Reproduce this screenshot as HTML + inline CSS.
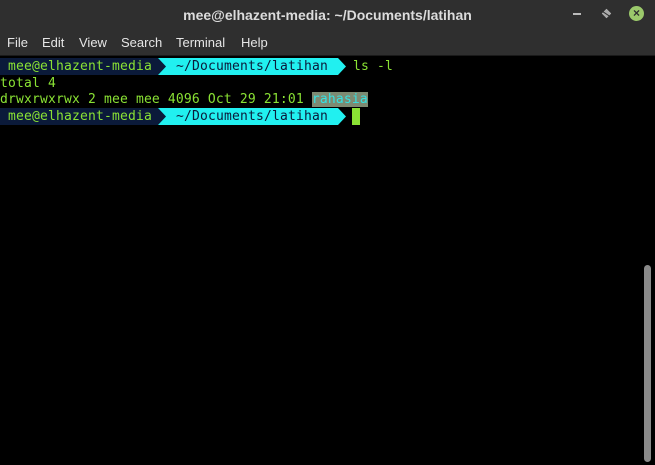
<!DOCTYPE html>
<html><head><meta charset="utf-8"><style>
body{margin:0;width:655px;height:465px;background:#000;overflow:hidden;position:relative;font-family:"Liberation Sans","DejaVu Sans",sans-serif}
.title{position:absolute;left:0;top:0;width:655px;height:30px;background:#2f2f2f;color:#dcdcdc;font-size:14px;font-weight:bold;text-align:center;line-height:30px}
.menu{position:absolute;left:0;top:30px;width:655px;height:26px;background:#2f2f2f;color:#e6e6e6;font-size:13px;line-height:25px}
.menu span{position:absolute}
.t{position:absolute;font-family:"DejaVu Sans Mono",monospace;font-size:13px;letter-spacing:0.17px;color:#8ae234;white-space:pre;line-height:17px;height:17px}
</style></head><body>
<div class="title">mee@elhazent-media: ~/Documents/latihan</div>
<div style="position:absolute;left:573px;top:13px;width:8px;height:2px;background:#bbb"></div>
<div style="position:absolute;left:603px;top:10px;width:7px;height:7px;background:#aaa;transform:rotate(45deg);clip-path:polygon(0 0,100% 0,100% 40%,0 60%)"></div>
<div style="position:absolute;left:603px;top:10px;width:7px;height:7px;background:#aaa;transform:rotate(45deg);clip-path:polygon(0 75%,100% 55%,100% 100%,0 100%)"></div>
<div style="position:absolute;left:629px;top:6px;width:15px;height:15px;border-radius:50%;background:#9bc96b;color:#2f2f2f;font-size:12px;font-weight:bold;text-align:center;line-height:15px">×</div>
<div class="menu"><span style="left:7px">File</span><span style="left:42px">Edit</span><span style="left:79px">View</span><span style="left:121px">Search</span><span style="left:176px">Terminal</span><span style="left:241px">Help</span></div>
<div style="position:absolute;left:0;top:55px;width:655px;height:1px;background:#1a1a1a"></div>

<svg style="position:absolute;left:0;top:58px" width="350" height="17"><polygon points="0,0 158,0 166,8.5 158,17 0,17" fill="#0b1a3a"/><polygon points="158,0 338,0 346,8.5 338,17 158,17 166,8.5" fill="#21f0f0"/></svg>
<div class="t" style="left:8px;top:58px">mee@elhazent-media</div>
<div class="t" style="left:176px;top:58px;color:#0b1a3a">~/Documents/latihan</div>
<div class="t" style="left:353px;top:58px">ls -l</div>
<div class="t" style="left:0;top:75px">total 4</div>
<div class="t" style="left:0;top:91px">drwxrwxrwx 2 mee mee 4096 Oct 29 21:01 <span style="background:#7d8a72;color:#34e2e2">rahasia</span></div>
<svg style="position:absolute;left:0;top:108px" width="350" height="17"><polygon points="0,0 158,0 166,8.5 158,17 0,17" fill="#0b1a3a"/><polygon points="158,0 338,0 346,8.5 338,17 158,17 166,8.5" fill="#21f0f0"/></svg>
<div class="t" style="left:8px;top:108px">mee@elhazent-media</div>
<div class="t" style="left:176px;top:108px;color:#0b1a3a">~/Documents/latihan</div>
<div style="position:absolute;left:352px;top:108px;width:8px;height:17px;background:#8ae234"></div>
<div style="position:absolute;left:644px;top:265px;width:7px;height:197px;border-radius:4px;background:#8a8a8a"></div>
</body></html>
